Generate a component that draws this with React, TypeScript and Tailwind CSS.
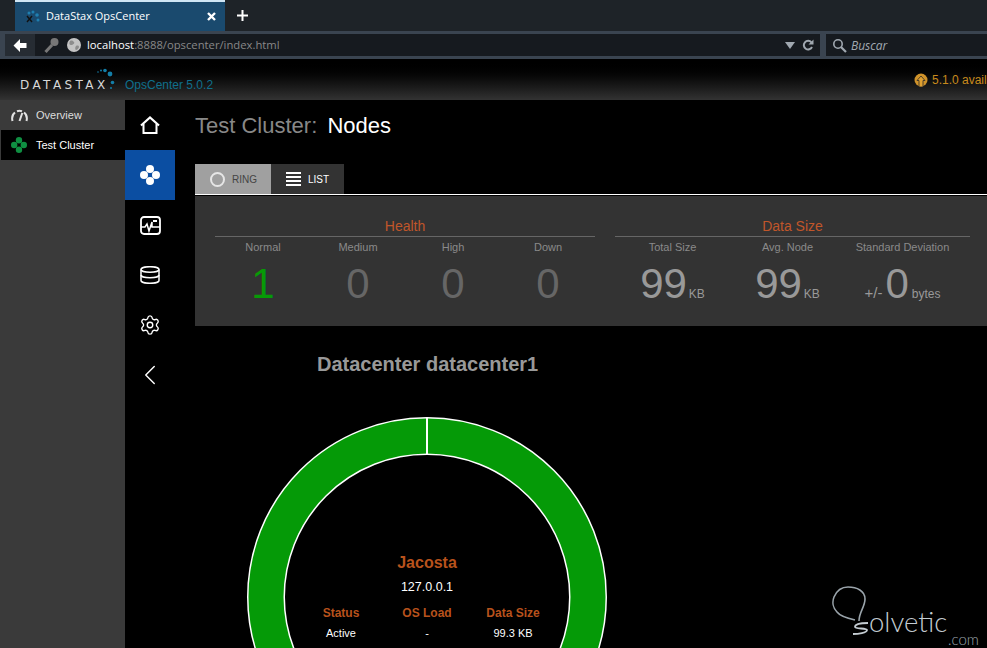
import { ChevronLeft, Settings } from "lucide-react";

const Cluster = ({ color, size }: { color: string; size: number }) => (
  <svg width={size} height={size} viewBox="0 0 20 20">
    <circle cx="10" cy="4" r="4" fill={color} />
    <circle cx="10" cy="16" r="4" fill={color} />
    <circle cx="4" cy="10" r="4" fill={color} />
    <circle cx="16" cy="10" r="4" fill={color} />
  </svg>
);

const StatLabel = ({ children }: { children: string }) => (
  <div className="text-[11px] leading-[13px] text-[#8a8a8a] text-center">{children}</div>
);

const healthStats = [
  { label: "Normal", value: "1", color: "text-[#079a07]" },
  { label: "Medium", value: "0", color: "text-[#666666]" },
  { label: "High", value: "0", color: "text-[#666666]" },
  { label: "Down", value: "0", color: "text-[#666666]" },
];

const sizeStats = [
  { label: "Total Size", value: "99", unit: "KB" },
  { label: "Avg. Node", value: "99", unit: "KB" },
];

const BrowserChrome = () => (
  <div className="font-['Open_Sans',sans-serif]">
    <div className="h-[31px] bg-[#1e2328] flex pl-[15px]">
      <div className="w-[210px] h-[31px] bg-[#1a4a6e] border-t-2 border-[#cfe6f5] flex items-center pl-[10px] pr-[9px] text-white">
        <svg width="16" height="16" viewBox="0 0 16 16" className="mr-[5px]">
          <circle cx="4" cy="4" r="1.5" fill="#1f7fb0" />
          <circle cx="8" cy="3" r="1.5" fill="#1f7fb0" />
          <circle cx="12" cy="6" r="1.8" fill="#1f7fb0" />
          <circle cx="13" cy="11" r="1.5" fill="#1f7fb0" />
          <path d="M2 7l5 6M7 7l-5 6" stroke="#111" strokeWidth="1.4" />
        </svg>
        <span className="text-[11px] flex-1 whitespace-nowrap">DataStax OpsCenter</span>
        <svg width="9" height="9" viewBox="0 0 9 9">
          <path d="M1 1l7 7M8 1l-7 7" stroke="#fff" strokeWidth="2.4" />
        </svg>
      </div>
      <svg width="11" height="11" viewBox="0 0 11 11" className="ml-[12px] mt-[10px]">
        <path d="M5.5 0v11M0 5.5h11" stroke="#fff" strokeWidth="2" />
      </svg>
    </div>
    <div className="h-[28px] bg-[#3a4450] flex items-center pl-[5px] gap-[6px]">
      <div className="w-[815px] h-[22px] bg-[#161a1f] flex items-center">
        <div className="w-[30px] h-[22px] bg-[#262c33] flex items-center justify-center">
          <svg width="14" height="13" viewBox="0 0 14 13">
            <path d="M7 0L0.5 6.500 7 13V9H13.500V4H7z" fill="#fff" />
          </svg>
        </div>
        <svg width="16" height="16" viewBox="0 0 16 16" className="ml-[9px]">
          <path d="M1.5 15L8 8" stroke="#777" strokeWidth="3" />
          <circle cx="10.5" cy="5" r="4" fill="#777" />
        </svg>
        <svg width="14" height="14" viewBox="0 0 14 14" className="ml-[7px]">
          <circle cx="7" cy="7" r="7" fill="#c4c4c4" />
          <path d="M3 3c2-1 3 0 4 1S6 7 4 7 2 5 3 3zM9 8c2-1 3 0 3 1s-2 3-3 3-1-3 0-4z" fill="#8d8d8d" />
        </svg>
        <span className="text-[11.25px] text-[#888888] ml-[6px] mt-[1px] whitespace-nowrap flex-1">
          <span className="text-white font-medium">localhost</span>:8888/opscenter/index.html
        </span>
        <svg width="10" height="7" viewBox="0 0 10 7" className="mr-[7px]">
          <path d="M0 0h10L5 7z" fill="#a0a8b0" />
        </svg>
        <svg width="12" height="12" viewBox="0 0 12 12" className="mr-[6px]">
          <path d="M10 8a4.3 4.3 0 1 1-.6-4.6" fill="none" stroke="#a0a8b0" strokeWidth="2" />
          <path d="M11.5 0.5v5h-5z" fill="#a0a8b0" />
        </svg>
      </div>
      <div className="flex-1 h-[22px] bg-[#161a1f] flex items-center pl-[6px]">
        <svg width="15" height="15" viewBox="0 0 15 15">
          <circle cx="6" cy="6" r="4.2" fill="none" stroke="#a0a8b0" strokeWidth="1.6" />
          <path d="M9 9l5 5" stroke="#a0a8b0" strokeWidth="2.2" />
        </svg>
        <span className="text-[12px] italic text-[#a0a8b0] ml-[4px] mt-[1px]">Buscar</span>
      </div>
    </div>
  </div>
);

const Ring = () => (
  <div className="relative w-[360px] h-[360px] ml-[52px] mt-[41px] shrink-0">
    <svg width="360" height="360" viewBox="0 0 360 360">
      <circle cx="180" cy="180" r="161" fill="none" stroke="#fff" strokeWidth="38" />
      <circle cx="180" cy="180" r="161" fill="none" stroke="#059a07" strokeWidth="35" />
      <path d="M180 0.5V37" stroke="#fff" strokeWidth="2" />
    </svg>
    <div className="absolute left-[51px] top-[137px] w-[258px] text-center">
      <div className="text-[16px] leading-[18px] font-bold text-[#b8521c]">Jacosta</div>
      <div className="text-[12.5px] leading-[14px] text-white mt-[8px]">127.0.0.1</div>
      <div className="grid grid-cols-3 mt-[12px] text-[12px] leading-[14px]">
        <div className="font-bold text-[#b8521c]">Status</div>
        <div className="font-bold text-[#b8521c]">OS Load</div>
        <div className="font-bold text-[#b8521c]">Data Size</div>
        <div className="text-white text-[11px] mt-[6px]">Active</div>
        <div className="text-white text-[11px] mt-[6px]">-</div>
        <div className="text-white text-[11px] mt-[6px]">99.3 KB</div>
      </div>
    </div>
  </div>
);

const App = () => {
  return (
    <div className="relative w-[987px] h-[648px] overflow-hidden bg-black font-['Liberation_Sans',sans-serif]">
      <BrowserChrome />

      <div className="h-[41px] bg-gradient-to-b from-black to-[#333333] flex items-center relative">
        <span className="ml-[20px] mt-[10px] w-[96px] text-[12px] tracking-[3.4px] text-[#d8d8d8] font-['DejaVu_Sans',sans-serif] whitespace-nowrap">
          DATASTAX
        </span>
        <svg width="20" height="24" viewBox="0 0 20 24" className="absolute left-[96px] top-[9px]">
          <circle cx="2" cy="4" r="0.8" fill="#137ea8" />
          <circle cx="5" cy="2.500" r="1" fill="#137ea8" />
          <circle cx="9" cy="2.500" r="1.800" fill="#137ea8" />
          <circle cx="14" cy="6" r="2.400" fill="#137ea8" />
          <circle cx="16.500" cy="14.500" r="1.800" fill="#137ea8" />
          <circle cx="15" cy="20" r="1" fill="#137ea8" />
        </svg>
        <span className="ml-[9px] mt-[11px] text-[12px] text-[#0f6f8c] whitespace-nowrap">OpsCenter 5.0.2</span>
        <div className="ml-auto flex items-center text-[12px] text-[#c98a1c] w-[73px] overflow-hidden whitespace-nowrap">
          <svg width="14" height="14" viewBox="0 0 14 14" className="mr-[4px] shrink-0">
            <circle cx="7" cy="7" r="6.500" fill="#d0932a" />
            <path d="M7 3L3 7.500H5V14H9V7.500H11z" fill="#e0a030" stroke="#2a2a2a" strokeWidth="0.800" />
          </svg>
          5.1.0 available
        </div>
      </div>

      <div className="flex h-[548px]">
        <aside className="w-[125px] bg-[#3a3a3a] shrink-0 text-[11px] text-white">
          <div className="h-[30px] flex items-center pl-[11px] text-[#dddddd]">
            <svg width="17" height="13" viewBox="0 0 17 13" className="mr-[8px]">
              <path
                d="M1.500 12C0.500 8 2 5 4 3.500M6 2.200C7.500 1.600 9.500 1.600 11 2.200M13 3.500C15 5 16.500 8 15.500 12"
                fill="none"
                stroke="#e2e2e2"
                strokeWidth="2"
              />
              <path d="M8.500 12l2.800-8" stroke="#e2e2e2" strokeWidth="2" />
            </svg>
            Overview
          </div>
          <div className="h-[30px] ml-[1px] bg-black flex items-center pl-[10px]">
            <span className="mr-[9px] flex">
              <Cluster color="#0f8f42" size={16} />
            </span>
            Test Cluster
          </div>
        </aside>

        <nav className="w-[50px] shrink-0 bg-black">
          <div className="h-[50px] flex items-center justify-center">
            <svg width="20" height="18" viewBox="0 0 20 18">
              <path d="M1 9.500l9-8 9 8" fill="none" stroke="#fff" strokeWidth="2.200" />
              <path d="M3.500 8v9h13V8" fill="none" stroke="#fff" strokeWidth="2" />
            </svg>
          </div>
          <div className="h-[50px] bg-[#0b4ea2] flex items-center justify-center">
            <Cluster color="#ffffff" size={20} />
          </div>
          <div className="h-[50px] flex items-center justify-center">
            <svg width="21" height="19" viewBox="0 0 21 19">
              <rect x="1" y="1" width="19" height="17" rx="3" fill="none" stroke="#fff" strokeWidth="1.800" />
              <path d="M1 11h4l2-3 2 7 3-9v5h8" fill="none" stroke="#fff" strokeWidth="1.500" />
              <rect x="13" y="4" width="4" height="2" fill="#fff" />
            </svg>
          </div>
          <div className="h-[50px] flex items-center justify-center">
            <svg width="20" height="18" viewBox="0 0 20 18" fill="none" stroke="#fff" strokeWidth="1.500">
              <ellipse cx="10" cy="3.500" rx="9" ry="2.800" />
              <path d="M1 3.500v11c0 1.500 4 2.800 9 2.800s9-1.300 9-2.800v-11" />
              <path d="M1 9c0 1.500 4 2.800 9 2.800s9-1.300 9-2.800" />
            </svg>
          </div>
          <div className="h-[50px] flex items-center justify-center">
            <Settings size={22} color="#ffffff" strokeWidth={1.500} />
          </div>
          <div className="h-[50px] flex items-center justify-center">
            <ChevronLeft size={34} color="#ffffff" strokeWidth={1} />
          </div>
        </nav>

        <main className="flex-1 min-w-0 pl-[20px]">
          <h1 className="h-[64px] pt-[13px] text-[22px] leading-[26px] font-normal text-[#888888]">
            Test Cluster: <span className="text-white ml-[4px]">Nodes</span>
          </h1>

          <div className="flex h-[31px] border-b border-white text-[10px]">
            <div className="w-[76px] h-[30px] bg-[#a0a0a0] flex items-center pl-[15px] text-[#444444]">
              <span className="w-[15px] h-[15px] rounded-full border-2 border-[#e6e6e6] mr-[7px]" />
              RING
            </div>
            <div className="w-[73px] h-[30px] bg-[#333333] flex items-center pl-[15px] text-white">
              <span className="w-[15px] mr-[7px] flex flex-col gap-[2px]">
                <span className="h-[2px] bg-white" />
                <span className="h-[2px] bg-white" />
                <span className="h-[2px] bg-white" />
                <span className="h-[2px] bg-white" />
              </span>
              LIST
            </div>
          </div>

          <section className="mt-[1px] h-[130px] bg-[#333333] flex pl-[20px] pr-[17px] gap-[20px]">
            <div className="w-[380px]">
              <div className="h-[41px] pt-[21px] border-b border-[#666666] text-center text-[14px] leading-[18px] text-[#c0562a]">
                Health
              </div>
              <div className="grid grid-cols-4 pt-[4px]">
                {healthStats.map((stat) => (
                  <div key={stat.label} className="pl-[1px]">
                    <StatLabel>{stat.label}</StatLabel>
                    <div className={`text-[42px] leading-[42px] mt-[9px] text-center ${stat.color}`}>
                      {stat.value}
                    </div>
                  </div>
                ))}
              </div>
            </div>
            <div className="w-[355px]">
              <div className="h-[41px] pt-[21px] border-b border-[#666666] text-center text-[14px] leading-[18px] text-[#c0562a]">
                Data Size
              </div>
              <div className="grid grid-cols-[115px_115px_115px] pt-[4px]">
                {sizeStats.map((stat) => (
                  <div key={stat.label}>
                    <StatLabel>{stat.label}</StatLabel>
                    <div className="flex items-baseline justify-center mt-[9px] text-[#999999]">
                      <span className="text-[42px] leading-[42px]">{stat.value}</span>
                      <span className="text-[12px] ml-[2px]">{stat.unit}</span>
                    </div>
                  </div>
                ))}
                <div className="whitespace-nowrap">
                  <StatLabel>Standard Deviation</StatLabel>
                  <div className="flex items-baseline justify-center mt-[9px] text-[#999999]">
                    <span className="text-[15px] mr-[3px]">+/-</span>
                    <span className="text-[42px] leading-[42px]">0</span>
                    <span className="text-[12px] ml-[3px]">bytes</span>
                  </div>
                </div>
              </div>
            </div>
          </section>

          <h2 className="mt-[26px] ml-[122px] text-[20px] leading-[24px] font-bold text-[#999999]">
            Datacenter datacenter1
          </h2>
          <Ring />
        </main>
      </div>

      <div className="absolute left-[832px] top-[586px] w-[155px] h-[62px] text-[#c4ccd2]">
        <svg width="40" height="52" viewBox="0 0 40 52" className="absolute left-0 top-0">
          <path
            d="M23 34C14 32 8 30 5 26 1 22 0 16 2 11 5 4 10 1 16 1 25 1 33 5 33 13 33 21 27 26 27 35"
            fill="none"
            stroke="#9aa4ab"
            strokeWidth="1.600"
          />
          <path
            d="M36 37C30 37 23 38 23 41 23 43 35 42 35 44 35 47 26 48 21 48"
            fill="none"
            stroke="#c4ccd2"
            strokeWidth="1.800"
          />
        </svg>
        <span className="absolute left-[37px] top-[18px] text-[27.5px] leading-[36px] font-['Lato',sans-serif] font-light whitespace-nowrap">
          olvetic
        </span>
        <span className="absolute left-[116px] top-[44px] text-[15px] leading-[18px] font-['Lato',sans-serif] font-light text-[#9aa4ab]">
          .com
        </span>
      </div>
    </div>
  );
};

export default App;
